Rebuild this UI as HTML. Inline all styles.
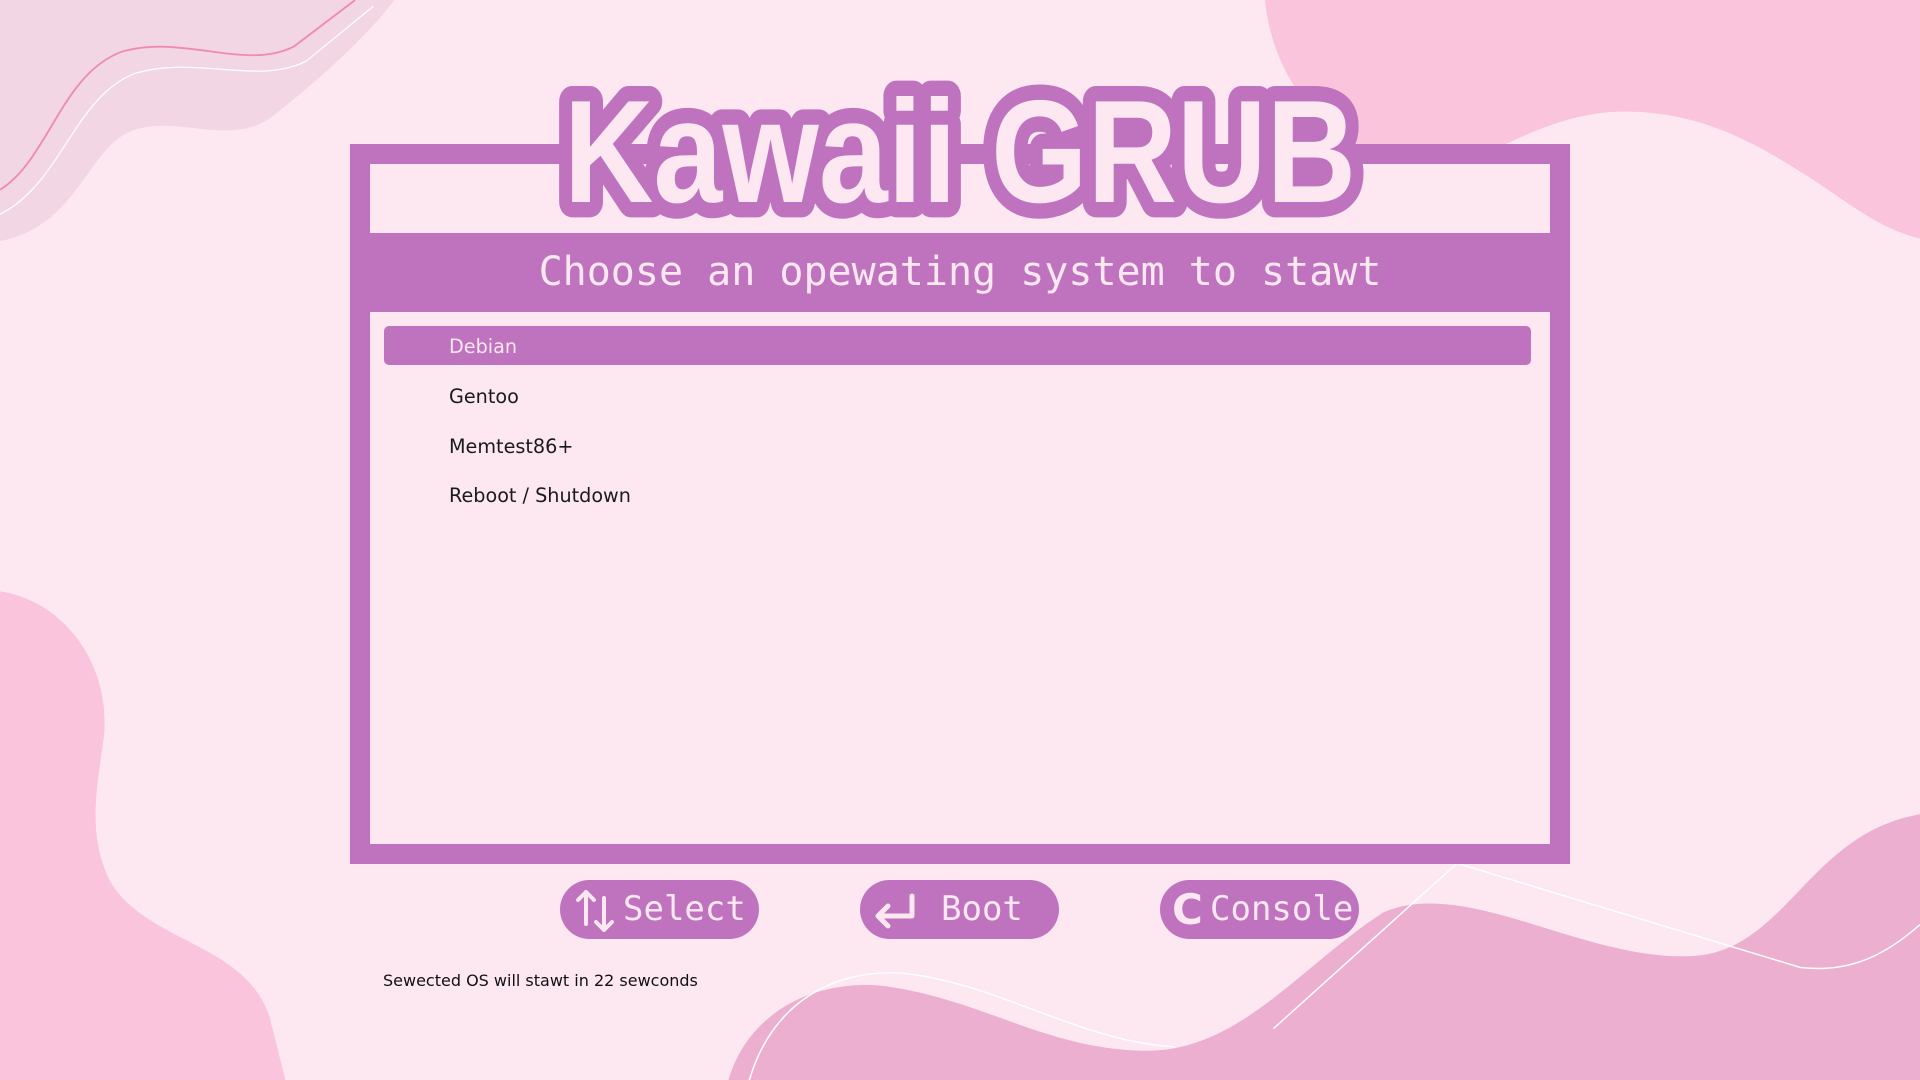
<!DOCTYPE html>
<html><head><meta charset="utf-8"><style>
html,body{margin:0;padding:0;width:1920px;height:1080px;overflow:hidden;background:#fde8f1;}
body{position:relative;font-family:"Liberation Sans","DejaVu Sans",sans-serif;}
.bg{position:absolute;left:0;top:0;}
.frame{position:absolute;left:350px;top:144px;width:1180px;height:680px;border:20px solid #bf72bd;background:#fde8f1;}
.band{position:absolute;left:350px;top:233px;width:1220px;height:79px;background:#bf72bd;color:#fde8f1;font-family:"DejaVu Sans Mono","Liberation Mono",monospace;font-size:40px;text-align:center;line-height:79px;}
.sel{position:absolute;left:384px;top:326px;width:1147px;height:39px;background:#bf72bd;border-radius:5px;}
.item{position:absolute;left:449px;font-family:"DejaVu Sans",sans-serif;font-size:19.2px;color:#1a1a1a;line-height:24px;}
.btn{position:absolute;top:880px;width:199px;height:59px;border-radius:30px;background:#bf72bd;color:#fde8f1;font-family:"DejaVu Sans Mono","Liberation Mono",monospace;font-size:34px;line-height:59px;}
.foot{position:absolute;left:383px;top:971px;font-family:"DejaVu Sans",sans-serif;font-size:16px;color:#111;}
</style></head><body>
<svg class="bg" width="1920" height="1080" viewBox="0 0 1568 882" preserveAspectRatio="none">
<path d="M0,0 L322,0 C300,30 255,70 220,97 C185,120 140,92 105,108 C70,125 62,185 0,197 Z" fill="#f3d6e3"/>
<path d="M0,155 C40,130 50,60 100,42 C150,28 200,58 240,38 L290,0" fill="none" stroke="#f08bb0" stroke-width="1.5"/>
<path d="M0,175 C50,150 60,80 110,60 C160,45 210,70 250,50 L305,5" fill="none" stroke="#fff" stroke-width="1"/>
<path d="M1033,0 C1040,70 1090,125 1150,135 C1210,142 1240,100 1310,92 C1380,86 1430,115 1470,140 C1510,165 1530,185 1568,195 L1568,0 Z" fill="#f9c4dc"/>
<path d="M0,483 C50,490 90,540 85,600 C80,640 70,680 90,720 C120,770 200,770 220,830 L233,882 L0,882 Z" fill="#f9c4dc"/>
<path d="M595,882 C610,830 660,800 720,805 C800,815 850,855 930,858 C1010,862 1060,790 1130,745 C1200,715 1300,790 1390,780 C1460,770 1480,680 1568,665 L1568,882 Z" fill="#edafcf"/>
<path d="M612,882 C630,820 680,790 740,795 C820,805 880,850 960,855" fill="none" stroke="#fff" stroke-width="1.2"/>
<path d="M1040,840 L1190,705 L1470,790 C1510,795 1540,780 1568,755" fill="none" stroke="#fff" stroke-width="1.2"/>
</svg>
<div class="frame"></div>
<div class="band">Choose an opewating system to stawt</div>
<div class="sel"></div>
<div class="item" style="top:335px;color:#fde8f1">Debian</div>
<div class="item" style="top:385px">Gentoo</div>
<div class="item" style="top:435px">Memtest86+</div>
<div class="item" style="top:484px">Reboot / Shutdown</div>
<svg style="position:absolute;left:0;top:0" width="1920" height="300">
<g transform="translate(960,202) scale(1,1.18)">
<text x="0" y="0" text-anchor="middle" font-family="Liberation Sans, sans-serif" font-weight="bold" font-size="124" fill="#bf72bd" stroke="#bf72bd" stroke-width="26" stroke-linejoin="round">Kawaii GRUB</text>
<text x="0" y="0" text-anchor="middle" font-family="Liberation Sans, sans-serif" font-weight="bold" font-size="124" fill="#fde8f1">Kawaii GRUB</text>
</g>
</svg>
<div class="btn" style="left:560px">
<svg style="position:absolute;left:14px;top:8px" width="44" height="46" viewBox="0 0 44 46" fill="none" stroke="#fde8f1" stroke-width="4" stroke-linecap="round" stroke-linejoin="round"><path d="M12,36 V4 M4,12 L12,4 L20,12"/><path d="M30,10 V42 M22,34 L30,42 L38,34"/></svg>
<span style="position:absolute;left:63px">Select</span></div>
<div class="btn" style="left:860px">
<svg style="position:absolute;left:12px;top:12px" width="48" height="38" viewBox="0 0 48 38" fill="none" stroke="#fde8f1" stroke-width="5" stroke-linecap="round" stroke-linejoin="round"><path d="M40,4 V24 H8 M16,14 L6,24 L16,34"/></svg>
<span style="position:absolute;left:81px">Boot</span></div>
<div class="btn" style="left:1160px">
<span style="position:absolute;left:12px;font-family:'DejaVu Sans',sans-serif;font-weight:bold;font-size:42px">C</span>
<span style="position:absolute;left:50px">Console</span></div>
<div class="foot">Sewected OS will stawt in 22 sewconds</div>
</body></html>
